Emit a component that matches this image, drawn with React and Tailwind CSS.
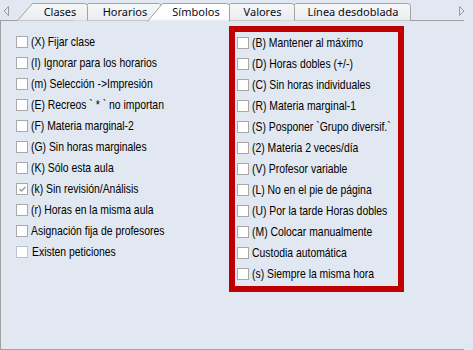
import React from "react";

const LEFT = [
  ["(X) Fijar clase", false],
  ["(I) Ignorar para los horarios", false],
  ["(m) Selección ->Impresión", false],
  ["(E) Recreos ` * ` no importan", false],
  ["(F) Materia marginal-2", false],
  ["(G) Sin horas marginales", false],
  ["(K) Sólo esta aula", false],
  ["(k) Sin revisión/Análisis", true],
  ["(r) Horas en la misma aula", false],
  ["Asignación fija de profesores", false],
  ["Existen peticiones", false, true],
];

const RIGHT = [
  "(B) Mantener al máximo",
  "(D) Horas dobles (+/-)",
  "(C) Sin horas individuales",
  "(R) Materia marginal-1",
  "(S) Posponer `Grupo diversif.`",
  "(2) Materia 2 veces/día",
  "(V) Profesor variable",
  "(L) No en el pie de página",
  "(U) Por la tarde Horas dobles",
  "(M) Colocar manualmente",
  "Custodia automática",
  "(s) Siempre la misma hora",
];

const TABS = [
  { label: "Clases", w: 71, ml: "ml-0", z: "z-[5]" },
  { label: "Horarios", w: 89, ml: "-ml-[15px]", z: "z-[4]" },
  { label: "Símbolos", w: 83, ml: "-ml-[15px]", z: "z-[10]", active: true },
  { label: "Valores", w: 80, ml: "-ml-[15px]", z: "z-[3]" },
  { label: "Línea desdoblada", w: 131, ml: "-ml-[15px]", z: "z-[2]" },
];

function Tab({ label, w, ml, z, active }) {
  const h = active ? 19 : 18;
  const path = `M0.5,${h + 0.5} L15.5,1.5 L${w - 3.5},1.5 Q${w - 0.5},1.5 ${w - 0.5},4.5 L${w - 0.5},${h + 0.5}`;
  const gid = active ? "gA" : "gI";
  return (
    <div
      className={`relative ${ml} ${z} ${active ? "h-[19px] -mb-[1px]" : "h-[18px]"} shrink-0`}
      style={{ width: w }}
    >
      <svg className="absolute inset-0" width={w} height={h + 1}>
        <defs>
          <linearGradient id="gI" x1="0" y1="0" x2="0" y2="1">
            <stop offset="0" stopColor="#f6f7f8" />
            <stop offset="1" stopColor="#e9ecef" />
          </linearGradient>
          <linearGradient id="gA" x1="0" y1="0" x2="0" y2="1">
            <stop offset="0" stopColor="#ffffff" />
            <stop offset="0.85" stopColor="#fbfcfd" />
            <stop offset="1" stopColor="#e1e8f1" />
          </linearGradient>
        </defs>
        <path d={path + " Z"} fill={`url(#${gid})`} stroke="none" />
        <path d={path} fill="none" stroke="#a3a3a3" strokeWidth="1" />
      </svg>
      <div className="relative flex h-[18px] items-center justify-center pl-[15px] pt-[1px] text-[11px] leading-none text-[#0a0a20] [font-family:'Noto_Sans',sans-serif]">
        {label}
      </div>
    </div>
  );
}

function Box({ checked, hover }) {
  return (
    <div
      className={`relative h-[12px] w-[12px] shrink-0 border bg-white ${
        hover ? "border-[#b8c4d6]" : "border-[#a8a8a8]"
      }`}
    >
      {checked && (
        <svg className="absolute left-[1px] top-[1px]" width="9" height="9" viewBox="0 0 9 9">
          <polyline points="1.5,4 3.5,6 7.5,2" fill="none" stroke="#9a9a9a" strokeWidth="1.4" />
        </svg>
      )}
    </div>
  );
}

function Row({ label, checked, hover }) {
  return (
    <div className="flex h-[21px] items-center">
      <Box checked={checked} hover={hover} />
      <span
        className={`${hover ? "ml-[4px]" : "ml-[3px]"} origin-left scale-x-[0.8] whitespace-nowrap text-[13px] leading-none text-black [font-family:'Liberation_Sans',sans-serif]`}
      >
        {label}
      </span>
    </div>
  );
}

export default function App() {
  return (
    <div className="relative h-[350px] w-[473px] overflow-hidden bg-[#e1e8f1]">
      {/* tab strip */}
      <div className="relative z-10 flex h-[20px] items-end">
        <div className="flex h-[20px] w-[17px] shrink-0 items-start pt-[6px] pl-[3px]">
          <svg width="7" height="10" viewBox="0 0 7 10">
            <path d="M5.5,0.5 L1,5 L5.5,9.5 Z" fill="none" stroke="#9a9a9a" strokeWidth="1" />
          </svg>
        </div>
        {TABS.map((t) => (
          <Tab key={t.label} {...t} />
        ))}
        <div className="ml-auto flex h-[20px] w-[15px] items-start pt-[6px]">
          <svg width="7" height="10" viewBox="0 0 7 10">
            <path d="M1.5,0.5 L6,5 L1.5,9.5 Z" fill="none" stroke="#9a9a9a" strokeWidth="1" />
          </svg>
        </div>
      </div>

      {/* panel */}
      <div className="flex h-[330px] w-[464px] items-start border-b border-l border-t border-[#a0a0a0] pl-[15px]">
        <div className="mt-[10px] flex w-[213px] shrink-0 flex-col">
          {LEFT.map(([l, c, h]) => (
            <Row key={l} label={l} checked={c} hover={h} />
          ))}
        </div>
        <div className="mt-[5px] flex h-[266px] w-[175px] shrink-0 flex-col border-[6px] border-[#c00000] pl-[2px]">
          {RIGHT.map((l) => (
            <Row key={l} label={l} />
          ))}
        </div>
      </div>
    </div>
  );
}
